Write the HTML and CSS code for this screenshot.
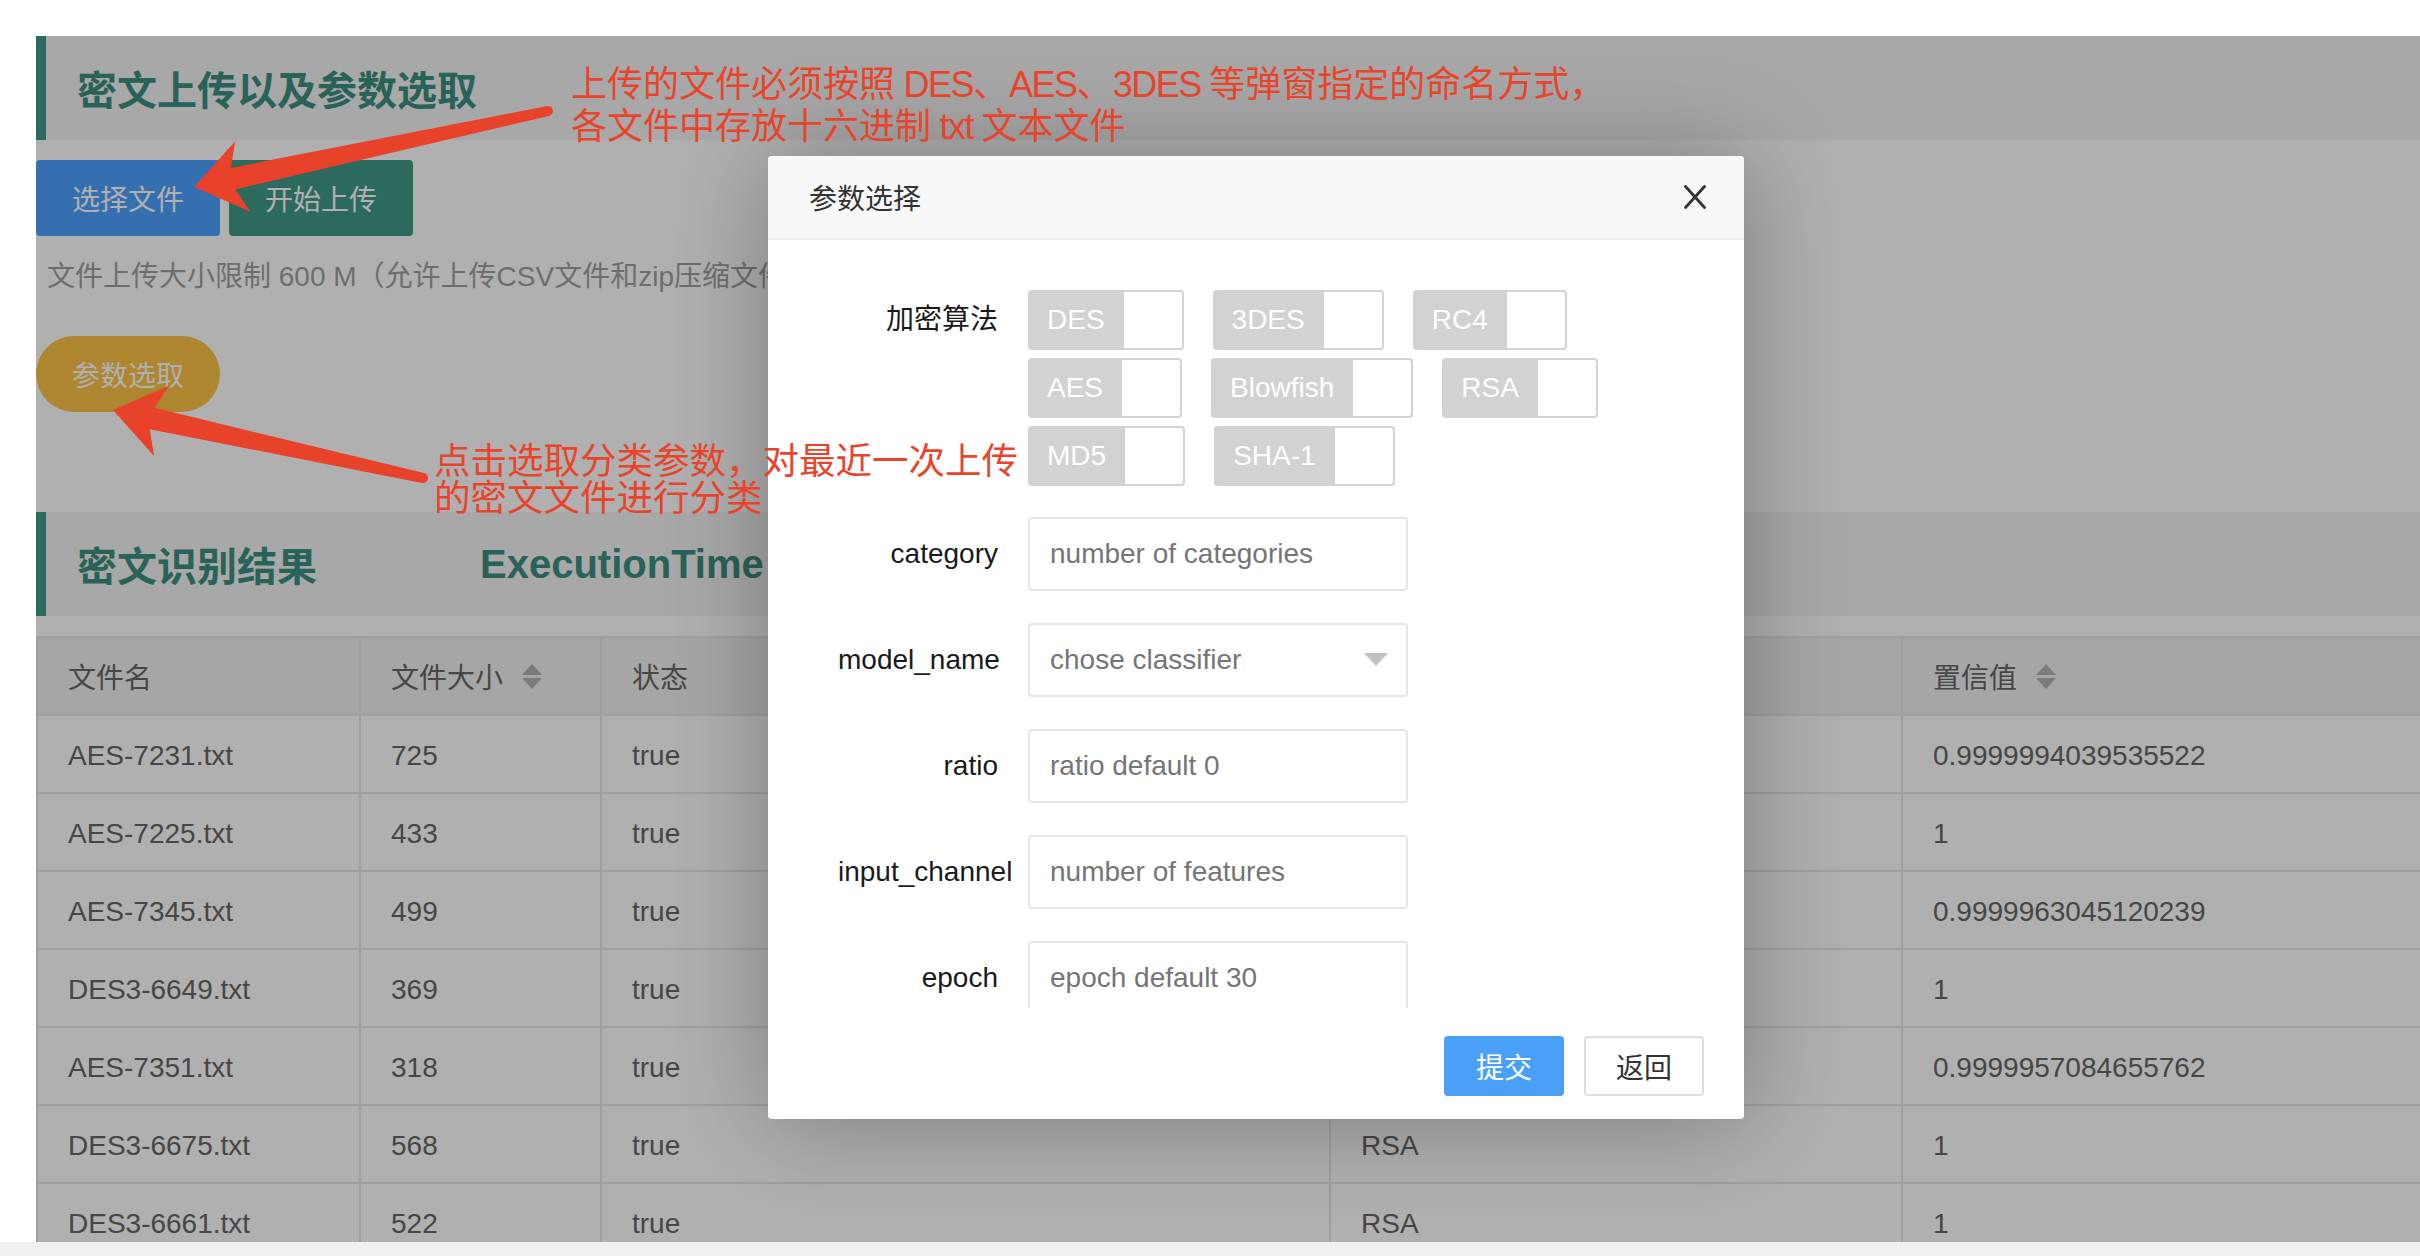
FILE: index.html
```html
<!DOCTYPE html>
<html lang="zh-CN">
<head>
<meta charset="utf-8">
<title>密文识别</title>
<link rel="stylesheet" href="styles.css">
</head>
<body>
<div class="frame">
  <main class="page">
    <section class="panel">
      <div class="sec-head"><h2 class="sec-title">密文上传以及参数选取</h2></div>
      <div class="toolbar">
        <button class="btn btn-blue">选择文件</button>
        <button class="btn btn-green">开始上传</button>
      </div>
      <p class="tip">文件上传大小限制 600 M（允许上传CSV文件和zip压缩文件）</p>
      <button class="btn btn-warm">参数选取</button>
    </section>

    <section class="panel result">
      <div class="sec-head"><h2 class="sec-title">密文识别结果</h2><span class="exec">ExecutionTime</span></div>
      <table class="grid">
        <colgroup>
          <col class="c1"><col class="c2"><col class="c3"><col class="c4"><col class="c5">
        </colgroup>
        <thead>
          <tr>
            <th>文件名</th>
            <th><span class="th-cell">文件大小<span class="sort"><i class="up"></i><i class="down"></i></span></span></th>
            <th>状态</th>
            <th>预测类型</th>
            <th><span class="th-cell">置信值<span class="sort"><i class="up"></i><i class="down"></i></span></span></th>
          </tr>
        </thead>
        <tbody>
          <tr><td>AES-7231.txt</td><td>725</td><td>true</td><td>AES</td><td>0.9999994039535522</td></tr>
          <tr><td>AES-7225.txt</td><td>433</td><td>true</td><td>AES</td><td>1</td></tr>
          <tr><td>AES-7345.txt</td><td>499</td><td>true</td><td>AES</td><td>0.9999963045120239</td></tr>
          <tr><td>DES3-6649.txt</td><td>369</td><td>true</td><td>RSA</td><td>1</td></tr>
          <tr><td>AES-7351.txt</td><td>318</td><td>true</td><td>AES</td><td>0.9999957084655762</td></tr>
          <tr><td>DES3-6675.txt</td><td>568</td><td>true</td><td>RSA</td><td>1</td></tr>
          <tr><td>DES3-6661.txt</td><td>522</td><td>true</td><td>RSA</td><td>1</td></tr>
        </tbody>
      </table>
    </section>
    <div class="shade"></div>
  </main>
</div>
<div class="statusbar"></div>

<div class="layer">
  <div class="layer-title">
    <span>参数选择</span>
    <svg class="layer-close" width="22" height="24" viewBox="0 0 22 24"><path d="M1.5 1.5 L20.5 22.5 M20.5 1.5 L1.5 22.5" stroke="#333" stroke-width="2.8" fill="none" stroke-linecap="round"/></svg>
  </div>
  <div class="layer-content">
    <form class="form">
      <div class="form-item chips">
        <label class="form-label">加密算法</label>
        <div class="chip-rows">
          <div class="chip-row">
            <div class="chip"><span>DES</span><i></i></div>
            <div class="chip"><span>3DES</span><i></i></div>
            <div class="chip"><span>RC4</span><i></i></div>
          </div>
          <div class="chip-row">
            <div class="chip"><span>AES</span><i></i></div>
            <div class="chip"><span>Blowfish</span><i></i></div>
            <div class="chip"><span>RSA</span><i></i></div>
          </div>
          <div class="chip-row">
            <div class="chip"><span>MD5</span><i></i></div>
            <div class="chip"><span>SHA-1</span><i></i></div>
          </div>
        </div>
      </div>
      <div class="form-item">
        <label class="form-label">category</label>
        <input class="input" placeholder="number of categories">
      </div>
      <div class="form-item">
        <label class="form-label">model_name</label>
        <div class="select">
          <input class="input" placeholder="chose classifier" readonly>
          <i class="select-arrow"></i>
        </div>
      </div>
      <div class="form-item">
        <label class="form-label">ratio</label>
        <input class="input" placeholder="ratio default 0">
      </div>
      <div class="form-item">
        <label class="form-label">input_channel</label>
        <input class="input" placeholder="number of features">
      </div>
      <div class="form-item">
        <label class="form-label">epoch</label>
        <input class="input" placeholder="epoch default 30">
      </div>
    </form>
  </div>
  <div class="layer-btns">
    <button class="lbtn lbtn-primary">提交</button>
    <button class="lbtn">返回</button>
  </div>
</div>

<svg class="arrows" width="2420" height="1256" viewBox="0 0 2420 1256">
  <path class="arrow" d="M194 187 L250.4 211.7 L235.4 189.4 L549.05 115.9 A5 5 0 0 0 546.95 106.1 L230.8 167.9 L235.3 141.3 Z"/>
  <path class="arrow" d="M113 410 L169.5 385.5 L154.4 407.8 L424.1 473.1 A5 5 0 0 1 421.9 482.9 L149.7 429.3 L154.1 455.9 Z"/>
</svg>

<div class="note note-1">上传的文件必须按照<span class="lat"> DES</span>、<span class="lat">AES</span>、<span class="lat">3DES </span>等弹窗指定的命名方式，<br>各文件中存放十六进制<span class="lat"> txt </span>文本文件</div>
<div class="note note-2">点击选取分类参数，对最近一次上传<br>的密文文件进行分类</div>
</body>
</html>
```

FILE: styles.css
```css
* { box-sizing: border-box; }

html, body { margin: 0; padding: 0; }

body {
  position: relative;
  width: 2420px;
  height: 1256px;
  overflow: hidden;
  background: #fff;
  font-family: "Liberation Sans", "Noto Sans CJK SC", sans-serif;
}

/* ---------- page under the shade ---------- */
.frame {
  height: 1242px;
  padding: 36px 0 0 36px;
}

.page {
  position: relative;
  width: 2384px;
  height: 1206px;
  overflow: hidden;
  background: #fff;
}

.sec-head {
  display: flex;
  align-items: center;
  height: 104px;
  padding-left: 31px;
  background: #f3f3f3;
  border-left: 10px solid #3f9a88;
}

.sec-title {
  margin: 0;
  font-size: 40px;
  font-weight: 700;
  color: #3b8f80;
}

.exec {
  margin-left: 163px;
  font-size: 40px;
  font-weight: 700;
  color: #3b8f80;
}

.toolbar {
  display: flex;
  gap: 9px;
  margin-top: 20px;
}

.btn {
  display: block;
  height: 76px;
  padding: 0 36px;
  border: 0;
  border-radius: 4px;
  font-family: inherit;
  font-size: 28px;
  color: #fff;
}

.btn-blue { background: #4da1ff; }
.btn-green { background: #409a88; }

.btn-warm {
  margin-top: 38px;
  border-radius: 38px;
  background: #fcc246;
}

.tip {
  margin: 20px 0 0;
  padding-left: 11px;
  font-size: 28px;
  line-height: 42px;
  color: #9f9f9f;
  white-space: nowrap;
}

.result { margin-top: 100px; }

.grid {
  width: 2600px;
  margin-top: 20px;
  table-layout: fixed;
  border-collapse: collapse;
  font-size: 28px;
  color: #666;
}

.grid .c1 { width: 323px; }
.grid .c2 { width: 241px; }
.grid .c3 { width: 729px; }
.grid .c4 { width: 572px; }
.grid .c5 { width: 735px; }

.grid th,
.grid td {
  height: 78px;
  padding: 0 30px;
  border: 2px solid #e6e6e6;
  text-align: left;
  vertical-align: middle;
  font-weight: 400;
  white-space: nowrap;
}

.grid tbody td { padding-top: 4px; }

.grid thead th { background: #f1f1f1; }
.grid tbody td { background: #fff; }

.th-cell {
  display: inline-flex;
  align-items: center;
}

.sort {
  display: flex;
  flex-direction: column;
  gap: 3px;
  margin-left: 19px;
}

.sort i {
  display: block;
  width: 0;
  height: 0;
  border-left: 10px solid transparent;
  border-right: 10px solid transparent;
}

.sort .up { border-bottom: 11px solid #b2b2b2; }
.sort .down { border-top: 11px solid #b2b2b2; }

.shade {
  position: absolute;
  inset: 0;
  background: rgba(0, 0, 0, 0.31);
}

.statusbar {
  height: 14px;
  background: #f0f0f0;
}

/* ---------- dialog ---------- */
.layer {
  position: absolute;
  left: 768px;
  top: 156px;
  display: flex;
  flex-direction: column;
  width: 976px;
  height: 963px;
  overflow: hidden;
  background: #fff;
  border-radius: 4px;
  box-shadow: 2px 2px 100px rgba(0, 0, 0, 0.3);
}

.layer-title {
  flex: none;
  display: flex;
  align-items: center;
  justify-content: space-between;
  height: 84px;
  padding: 0 38px 0 41px;
  background: #f8f8f8;
  border-bottom: 2px solid #eee;
  font-size: 28px;
  color: #333;
}

.layer-close { display: block; }

.layer-content {
  flex: none;
  height: 768px;
  overflow: hidden;
  padding: 50px 40px 0;
}

.form { margin: 0; }

.form-item {
  display: flex;
  margin-bottom: 32px;
}

.form-item.chips { margin-bottom: 31px; }

.form-label {
  flex: none;
  width: 220px;
  padding: 0 30px;
  font-size: 28px;
  line-height: 74px;
  color: #1a1a1a;
  text-align: right;
  white-space: nowrap;
}

.chips .form-label { line-height: 60px; }

.chip-rows {
  display: flex;
  flex-direction: column;
  gap: 8px;
}

.chip-row {
  display: flex;
  gap: 29px;
}

.chip {
  display: flex;
  height: 60px;
}

.chip span {
  padding: 0 19px;
  background: #d2d2d2;
  border-radius: 4px 0 0 4px;
  font-size: 28px;
  line-height: 60px;
  color: #fff;
}

.chip i {
  width: 60px;
  background: #fff;
  border: 2px solid #d2d2d2;
  border-left: 0;
  border-radius: 0 4px 4px 0;
}

.input {
  display: block;
  width: 380px;
  height: 74px;
  padding: 0 20px;
  border: 2px solid #e6e6e6;
  border-radius: 4px;
  background: #fff;
  font-family: inherit;
  font-size: 28px;
  color: #333;
  outline: none;
}

.input::placeholder { color: #757575; }

.select { position: relative; }

.select-arrow {
  position: absolute;
  right: 20px;
  top: 30px;
  width: 0;
  height: 0;
  border-left: 12px solid transparent;
  border-right: 12px solid transparent;
  border-top: 13px solid #c2c2c2;
}

.layer-btns {
  display: flex;
  justify-content: flex-end;
  gap: 20px;
  padding: 28px 40px 0;
}

.lbtn {
  height: 60px;
  padding: 0 30px;
  border: 2px solid #dedede;
  border-radius: 4px;
  background: #fff;
  font-family: inherit;
  font-size: 28px;
  color: #333;
}

.lbtn-primary {
  background: #4aa0f6;
  border-color: #4aa0f6;
  color: #fff;
}

/* ---------- screenshot annotations ---------- */
.arrows {
  position: absolute;
  left: 0;
  top: 0;
  pointer-events: none;
}

.arrow { fill: #e8422b; }

.note {
  position: absolute;
  font-size: 36px;
  color: #e8442c;
  white-space: nowrap;
}

.note .lat { letter-spacing: -1.5px; }

.note-1 {
  left: 571px;
  top: 64px;
  line-height: 42px;
}

.note-2 {
  left: 434px;
  top: 443px;
  font-size: 36.5px;
  line-height: 37px;
}
```
